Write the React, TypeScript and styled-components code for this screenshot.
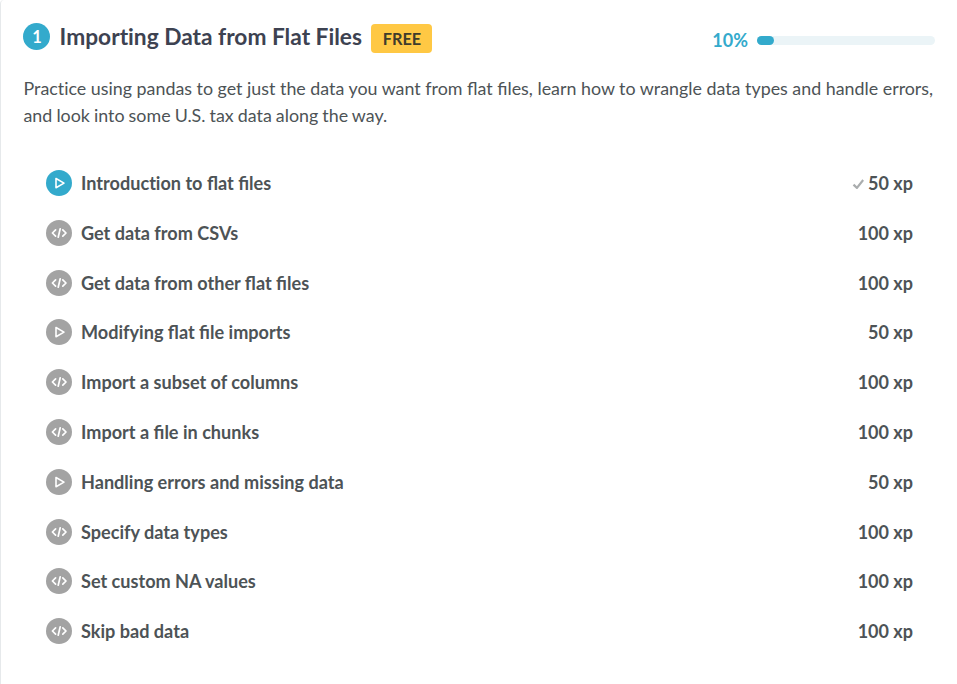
import React from "react";
import styled, { createGlobalStyle } from "styled-components";

const Global = createGlobalStyle`
  * { box-sizing: border-box; }
  body { margin: 0; background: #fff; font-family: Lato, sans-serif; color: #4d5356; }
`;
const Chapter = styled.main`
  height: 684px;
  padding: 22px 22px 0 22px;
  border-left: 1px solid #e6e9eb;
  border-top-left-radius: 4px;
`;
const Header = styled.header`
  display: flex;
  align-items: center;
  height: 32px;
`;
const Num = styled.span`
  width: 27px;
  height: 27px;
  margin-bottom: 3px;
  padding-left: 1px;
  border-radius: 50%;
  background: #33aacc;
  color: #fff;
  font-size: 16.5px;
  font-weight: 700;
  line-height: 28px;
  text-align: center;
`;
const Title = styled.h4`
  margin: 0 9px 2px 9.6px;
  font-size: 22.73px;
  line-height: 30px;
  font-weight: 700;
  color: #3d4251;
  white-space: nowrap;
`;
const Badge = styled.span`
  width: 61px;
  height: 29px;
  padding-left: 1px;
  border-radius: 4px;
  background: #ffc844;
  color: #3f3c2c;
  font-size: 16.3px;
  font-weight: 700;
  line-height: 29.5px;
  text-align: center;
`;
const Progress = styled.div`
  display: flex;
  align-items: center;
  margin: 4px 0 0 auto;
  gap: 9px;
  color: #33aacc;
  font-size: 18px;
  font-weight: 700;
`;
const Track = styled.div`
  width: 178px;
  height: 9px;
  border-radius: 5px;
  background: #ebf4f7;
`;
const Fill = styled.div`
  width: 17px;
  height: 100%;
  border-radius: 5px;
  background: #33aacc;
`;
const Description = styled.p`
  margin: 21px 0 0;
  padding-left: 0.5px;
  font-size: 17.85px;
  line-height: 27px;
  white-space: nowrap;
`;
const LastLine = styled.span`
  display: block;
  word-spacing: -0.5px;
`;
const List = styled.ul`
  list-style: none;
  margin: 29.15px 0 0;
  padding: 0 22px 0 23px;
`;
const Row = styled.li`
  display: flex;
  align-items: center;
  height: 49.8px;
  font-size: 18.1px;
  font-weight: 700;
`;
const Dot = styled.span<{ $done?: boolean }>`
  display: flex;
  width: 26px;
  height: 26px;
  margin-right: 9px;
  border-radius: 50%;
  background: ${(p) => (p.$done ? "#33aacc" : "#a3a3a3")};
`;
const Xp = styled.span`
  display: flex;
  align-items: center;
  gap: 4px;
  margin-left: auto;
  font-size: 18px;
`;
const Unjoined = styled.span`
  font-variant-ligatures: none;
`;

// Keeps the fi and fl ligatures but sets "ti" as two separate letters.
const Copy = ({ text }: { text: string }) => (
  <span>
    {text.split(/(ti)/).map((part, i) =>
      part === "ti" ? <Unjoined key={i}>{part}</Unjoined> : part
    )}
  </span>
);

const PlayIcon = () => (
  <svg width="26" height="26" viewBox="0 0 26 26" fill="none" stroke="#fff" strokeWidth="1.6" strokeLinejoin="round">
    <path d="M10 8.500v9.200l8-4.600z" />
  </svg>
);
const CodeIcon = () => (
  <svg width="26" height="26" viewBox="0 0 26 26" fill="none" stroke="#fff" strokeWidth="1.700" strokeLinecap="round" strokeLinejoin="round">
    <path d="M9.600 9.800L6.400 13l3.200 3.200M16.800 9.800l3.200 3.200-3.200 3.200M14.200 8.800l-2 8.400" />
  </svg>
);
const Check = () => (
  <svg width="12" height="12" viewBox="0 0 12 12" fill="none" stroke="#aaadae" strokeWidth="2.200">
    <path d="M1.500 7.600l3.400 3.300L11.200 3" />
  </svg>
);

type Exercise = { title: string; xp: number; video?: boolean; done?: boolean };
const exercises: Exercise[] = [
  { title: "Introduction to flat files", xp: 50, video: true, done: true },
  { title: "Get data from CSVs", xp: 100 },
  { title: "Get data from other flat files", xp: 100 },
  { title: "Modifying flat file imports", xp: 50, video: true },
  { title: "Import a subset of columns", xp: 100 },
  { title: "Import a file in chunks", xp: 100 },
  { title: "Handling errors and missing data", xp: 50, video: true },
  { title: "Specify data types", xp: 100 },
  { title: "Set custom NA values", xp: 100 },
  { title: "Skip bad data", xp: 100 },
];

export default function App() {
  return (
    <Chapter>
      <Global />
      <Header>
        <Num>1</Num>
        <Title><Copy text="Importing Data from Flat Files" /></Title>
        <Badge>FREE</Badge>
        <Progress>
          10%
          <Track><Fill /></Track>
        </Progress>
      </Header>
      <Description>
        <Copy text="Practice using pandas to get just the data you want from flat files, learn how to wrangle data types and handle errors," />
        <LastLine>and look into some U.S. tax data along the way.</LastLine>
      </Description>
      <List>
        {exercises.map((e) => (
          <Row key={e.title}>
            <Dot $done={e.done}>{e.video ? <PlayIcon /> : <CodeIcon />}</Dot>
            <Copy text={e.title} />
            <Xp>{e.done && <Check />}{e.xp} xp</Xp>
          </Row>
        ))}
      </List>
    </Chapter>
  );
}
